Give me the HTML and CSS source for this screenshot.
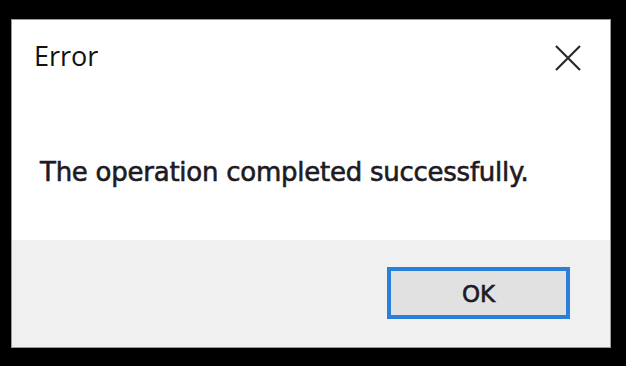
FILE: index.html
```html
<!DOCTYPE html>
<html>
<head>
<meta charset="utf-8">
<link rel="stylesheet" href="styles.css">
</head>
<body>
<div class="dialog">
  <div class="main">
    <div class="titlebar">
      <span class="title">Error</span>
      <span class="close" aria-label="Close">
        <svg width="26" height="26" viewBox="0 0 26 26"><path d="M1 1 L25 25 M25 1 L1 25" stroke="#2a2a2a" stroke-width="2.2" fill="none"/></svg>
      </span>
    </div>
    <div class="message">The operation completed successfully.</div>
  </div>
  <div class="footer">
    <button class="ok">OK</button>
  </div>
</div>
</body>
</html>
```

FILE: styles.css
```css
html, body {
  margin: 0;
  padding: 0;
  background: #000;
}
body {
  padding: 19px 0 0 11px;
}
.dialog {
  box-sizing: border-box;
  width: 600px;
  height: 329px;
  border: 1px solid #9a9a9a;
  background: #fff;
  display: flex;
  flex-direction: column;
}
.main {
  height: 220px;
  background: #fff;
}
.titlebar {
  display: flex;
  justify-content: space-between;
  align-items: flex-start;
  padding: 0 0 0 22px;
  height: 70px;
}
.title {
  font-family: "Open Sans", "Noto Sans", sans-serif;
  font-size: 27px;
  color: #111;
  margin-top: 16px;
  line-height: 40px;
}
.close {
  margin: 25px 29px 0 0;
  display: block;
  width: 26px;
  height: 26px;
}
.close svg { display: block; }
.message {
  font-family: "DejaVu Sans", Verdana, sans-serif;
  font-size: 26px;
  color: #1e1a24;
  padding: 0 0 0 28px;
  margin-top: 67px;
  line-height: 30px;
  letter-spacing: -0.25px;
  -webkit-text-stroke: 0.6px #1e1a24;
}
.footer {
  flex: 1;
  background: #f0f0f0;
  display: flex;
  justify-content: flex-end;
  align-items: flex-start;
  padding: 27px 40px 0 0;
}
.ok {
  box-sizing: border-box;
  width: 183px;
  height: 52px;
  border: 4px solid #2a7fd8;
  background: #e1e1e1;
  font-family: "DejaVu Sans", Verdana, sans-serif;
  font-size: 23px;
  color: #1e1a24;
  -webkit-text-stroke: 0.6px #1e1a24;
  padding: 2px 0 0;
  margin: 0;
}
```
